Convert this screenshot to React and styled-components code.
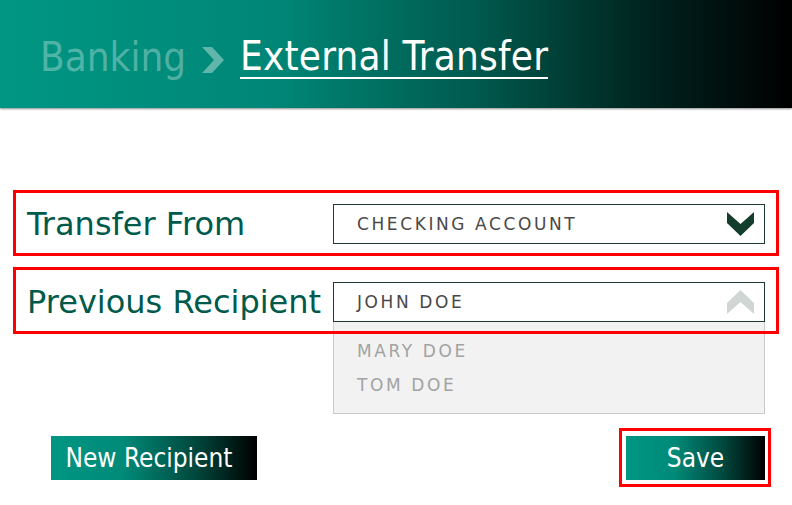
import React from 'react';
import styled, { createGlobalStyle } from 'styled-components';

const GlobalStyle = createGlobalStyle`
  body {
    margin: 0;
    background: #ffffff;
    font-family: "DejaVu Sans", sans-serif;
  }
`;

const Page = styled.div`
  width: 792px;
  height: 505px;
  overflow: hidden;
`;

const Header = styled.header`
  height: 108px;
  display: flex;
  align-items: center;
  gap: 16px;
  padding: 0 0 0 40px;
  background: linear-gradient(90deg, #009683 0%, #008676 35%, #005a4e 60%, #00231e 82%, #000000 100%);
  box-shadow: 0 1px 2px rgba(0, 0, 0, 0.45);
  font-family: "DejaVu Sans Condensed", "DejaVu Sans", sans-serif;
  font-stretch: condensed;
  font-size: 40px;
`;

const Crumb = styled.span`
  color: rgba(255, 255, 255, 0.32);
  padding-top: 6px;
`;

const Current = styled.span`
  color: #ffffff;
  border-bottom: 2px solid #ffffff;
  padding-top: 6px;
  line-height: 42px;
  letter-spacing: 0.2px;
`;

const Sep = styled.svg`
  width: 22px;
  height: 26px;
  margin-top: 12px;
`;

const Form = styled.main`
  padding: 82px 13px 0;
  display: flex;
  flex-direction: column;
  gap: 11px;
`;

const Field = styled.div`
  position: relative;
  height: ${p => p.$h}px;
  box-sizing: border-box;
  padding: 2px 14px 0;
  display: grid;
  grid-template-columns: 306px 1fr;
  align-items: center;
  z-index: ${p => p.$z || 0};

  &::after {
    content: "";
    position: absolute;
    inset: 0;
    border: 3px solid #ff0000;
    pointer-events: none;
    z-index: 3;
  }
`;

const Label = styled.label`
  color: #005a4c;
  font-size: 32px;
  line-height: 1;
  white-space: nowrap;
`;

const SelectWrap = styled.div`
  position: relative;
`;

const Select = styled.div`
  height: 40px;
  box-sizing: border-box;
  border: 1px solid #1c3a30;
  background: #ffffff;
  display: flex;
  align-items: center;
  justify-content: space-between;
  padding: 0 10px 0 23px;
  font-size: 17px;
  letter-spacing: 2.6px;
  color: #4a4848;
`;

const Chevron = styled.svg`
  width: 27px;
  height: 24px;
`;

const Menu = styled.ul`
  position: absolute;
  top: 40px;
  left: 0;
  right: 0;
  margin: 0;
  list-style: none;
  height: 92px;
  box-sizing: border-box;
  padding: 18px 0 0 23px;
  background: #f1f2f1;
  border: 1px solid #c9cccb;
  border-top: none;
  z-index: 2;
`;

const Option = styled.li`
  font-size: 17px;
  letter-spacing: 2.6px;
  color: #a3a3a3;
  height: 34px;
  line-height: 22px;
`;

const Actions = styled.div`
  display: flex;
  justify-content: space-between;
  align-items: center;
  padding: 94px 21px 0 51px;
`;

const Button = styled.button`
  height: 44px;
  width: ${p => p.$w}px;
  border: none;
  background: linear-gradient(90deg, #009683 0%, #008a78 35%, #00483d 70%, #000000 100%);
  color: #ffffff;
  font-family: "DejaVu Sans Condensed", "DejaVu Sans", sans-serif;
  font-stretch: condensed;
  font-size: 26px;
  padding: 0 ${p => p.$shift || 0}px 0 0;
  cursor: pointer;
`;

const Highlight = styled.div`
  border: 3px solid #ff0000;
  padding: 5px 3px 4px 4px;
  display: flex;
`;

const Down = ({ color }) => (
  <Chevron viewBox="0 0 27 24">
    <polygon points="0,0 13.5,12 27,0 27,11 13.5,24 0,11" fill={color} />
  </Chevron>
);

const Up = ({ color }) => (
  <Chevron viewBox="0 0 27 24">
    <polygon points="0,24 13.5,12 27,24 27,13 13.5,0 0,13" fill={color} />
  </Chevron>
);

const App = () => {
  return (
    <Page>
      <GlobalStyle />
      <Header>
        <Crumb>Banking</Crumb>
        <Sep viewBox="0 0 22 26">
          <polygon points="0,0 10,0 22,13 10,26 0,26 12,13" fill="rgba(255,255,255,0.38)" />
        </Sep>
        <Current>External Transfer</Current>
      </Header>
      <Form>
        <Field $h={66}>
          <Label>Transfer From</Label>
          <SelectWrap>
            <Select>
              CHECKING ACCOUNT
              <Down color="#143d2d" />
            </Select>
          </SelectWrap>
        </Field>
        <Field $h={67} $z={1}>
          <Label>Previous Recipient</Label>
          <SelectWrap>
            <Select>
              JOHN DOE
              <Up color="#cfd6d3" />
            </Select>
            <Menu>
              <Option>MARY DOE</Option>
              <Option>TOM DOE</Option>
            </Menu>
          </SelectWrap>
        </Field>
      </Form>
      <Actions>
        <Button $w={206} $shift={10}>New Recipient</Button>
        <Highlight>
          <Button $w={139}>Save</Button>
        </Highlight>
      </Actions>
    </Page>
  );
};

export default App;
